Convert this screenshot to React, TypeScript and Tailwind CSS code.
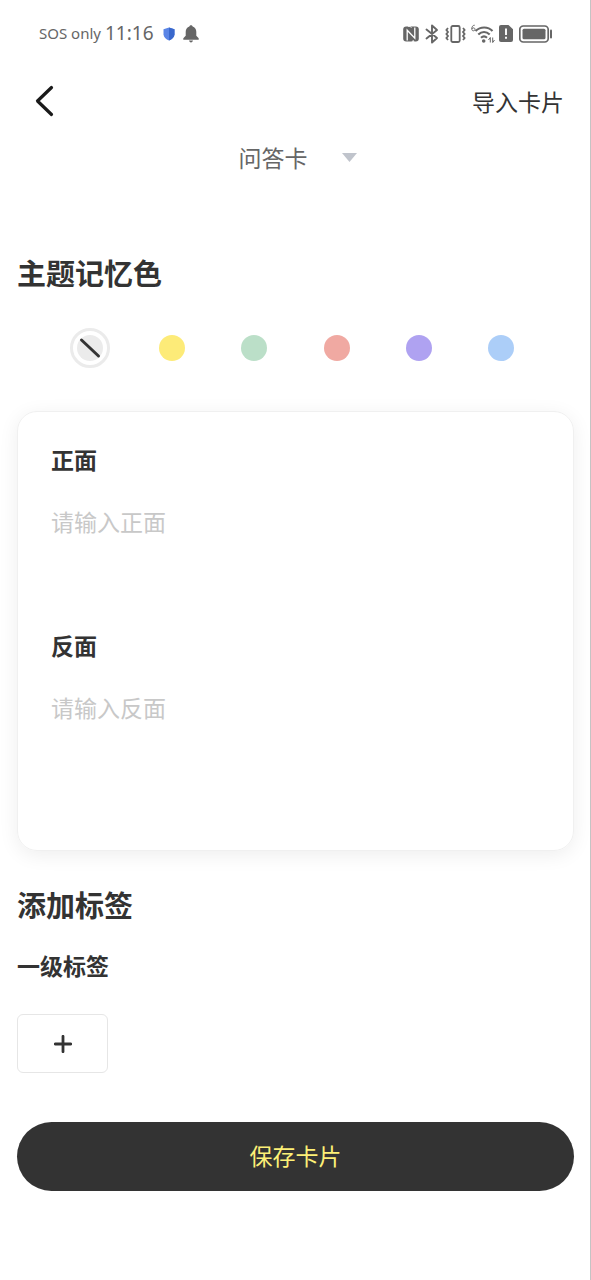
import { useState } from 'react';

const colors = [
  { name: '无颜色', fill: 'bg-[#ebebeb]' },
  { name: '黄色', fill: 'bg-[#fdeb78]' },
  { name: '绿色', fill: 'bg-[#bbdfc8]' },
  { name: '红色', fill: 'bg-[#f0a9a2]' },
  { name: '紫色', fill: 'bg-[#afa2f1]' },
  { name: '蓝色', fill: 'bg-[#accef8]' },
];

function StatusBar() {
  return (
    <div className="flex h-[67px] items-center justify-between pr-[37px] pl-[39px] text-[#666]">
      <div className="flex items-center font-['Noto_Sans',sans-serif]">
        <span className="text-[15px]">SOS only</span>
        <span className="ml-1 text-[19px]">11:16</span>
        <svg className="ml-[9px] h-[14px] w-[12px]" viewBox="0 0 12 14" aria-hidden="true">
          <path d="M6 .5 11.500 2.300V7.200C11.500 10 9 12.300 6 13.500 3 12.300.5 10 .5 7.200V2.300Z" fill="#5a85e6" />
          <path d="M6 .5 11.500 2.300V7.200C11.500 10 9 12.300 6 13.500Z" fill="#3a68cc" />
        </svg>
        <svg className="ml-2 h-[18px] w-[16px]" viewBox="0 0 16 18" fill="currentColor" aria-hidden="true">
          <path d="M8 .3c.9 0 1.600.6 1.600 1.300 2.300.7 3.700 2.600 3.700 5.200v4l2.400 2.500v1.500H.3v-1.500l2.400-2.500v-4c0-2.600 1.400-4.500 3.700-5.200C6.400.9 7.100.3 8 .3ZM6 15.600h4c-.2 1.100-1 1.900-2 1.900s-1.800-.8-2-1.900Z" />
        </svg>
      </div>
      <div className="flex items-center" aria-hidden="true">
        <svg className="h-4 w-4" viewBox="0 0 16 16">
          <rect x=".2" y=".5" width="15.600" height="15" rx="3" fill="currentColor" />
          <path d="M4.200 14.500V4.200l7.600 8V1.500" fill="none" stroke="#fff" strokeWidth="1.300" />
          <path d="M5 .3h2.200l1.200 1.500M8.800 15.700h2.200L9.800 14" fill="none" stroke="#fff" strokeWidth=".9" />
        </svg>
        <svg className="ml-[6px] h-[20px] w-[14px]" viewBox="0 0 14 20" fill="none" stroke="currentColor" strokeWidth="1.900" strokeLinejoin="round" strokeLinecap="round">
          <path d="m1.500 5.500 10.500 8.500-5 4.500v-17l5 4.500L1.500 14.500" />
        </svg>
        <svg className="ml-[6px] h-[18px] w-[21px]" viewBox="0 0 21 18" fill="none" stroke="currentColor" strokeWidth="1.800">
          <rect x="6.300" y="1" width="8.400" height="16" rx="1.500" />
          <path d="M3 3 1.400 5 3 7 1.400 9 3 11l-1.600 2L3 15M18 3l1.600 2L18 7l1.600 2-1.600 2 1.600 2-1.600 2" />
        </svg>
        <svg className="ml-[5px] h-[20px] w-[24px]" viewBox="0 0 24 20" fill="none" stroke="currentColor">
          <path d="M3.700 1.200C1.600 1.200.8 3 .8 4.700c0 1.500.6 2.100 1.600 2.100S4 6.200 4 5.300 3.300 3.900 2.400 3.900.9 4.400.8 5" strokeWidth="1" />
          <path d="M4.500 7c5-4.700 12.500-4.700 17 0M7.300 10.500c3.400-3.200 8-3.200 11.400 0M10 13.700c1.800-1.700 4.200-1.700 6 0" strokeWidth="2.100" />
          <circle cx="12.700" cy="17" r="1.800" fill="currentColor" stroke="none" />
          <path d="M19.300 18.500v-5l-1.800 2.500M21.700 13.500v5l1.800-2.500" strokeWidth="1" />
        </svg>
        <svg className="ml-1 h-[17px] w-[14px]" viewBox="0 0 14 17" fill="currentColor">
          <path d="M2 0h7.500L14 4.300V15a2 2 0 0 1-2 2H2a2 2 0 0 1-2-2V2a2 2 0 0 1 2-2Z" />
          <path d="M7 3.500V10M7 11.800v2" stroke="#fff" strokeWidth="1.900" />
        </svg>
        <svg className="ml-[6px] h-[18px] w-[34px]" viewBox="0 0 34 18">
          <rect x=".8" y="1" width="28.400" height="16" rx="3.500" fill="none" stroke="currentColor" strokeWidth="1.700" />
          <rect x="3.500" y="3.700" width="23" height="10.600" rx="1.500" fill="currentColor" />
          <path d="M32 5.500v7" stroke="currentColor" strokeWidth="2" strokeLinecap="round" />
        </svg>
      </div>
    </div>
  );
}

function Field({ id, label, placeholder }: { id: string; label: string; placeholder: string }) {
  return (
    <div className="flex flex-col">
      <label htmlFor={id} className="text-[23px] leading-[34px] font-bold">
        {label}
      </label>
      <textarea
        id={id}
        placeholder={placeholder}
        className="mt-7 h-[124px] w-full resize-none bg-transparent text-[23px] leading-[34px] outline-none placeholder:text-[#c8c8c8]"
      />
    </div>
  );
}

export default function App() {
  const [selected, setSelected] = useState(0);

  return (
    <div className="min-h-screen border-r border-[#c4c4c4] bg-white font-['Noto_Sans_CJK_SC',sans-serif] text-[#333]">
      <StatusBar />
      <header className="flex h-[68px] items-center justify-between pr-[26px] pl-[34px]">
        <button type="button" aria-label="返回">
          <svg className="h-[32px] w-[20px]" viewBox="0 0 20 32" fill="none" stroke="#1a1a1a" strokeWidth="3.200" strokeLinecap="round" strokeLinejoin="round">
            <path d="M17.500 2.500 3.500 16l14 13.500" />
          </svg>
        </button>
        <button type="button" className="text-[23px] leading-[34px]">导入卡片</button>
      </header>

      <main className="pr-4 pl-[17px]">
        <div className="flex h-11 items-center justify-center pl-1">
          <div className="relative flex items-center">
            <select aria-label="卡片类型" className="w-[118px] appearance-none bg-transparent text-[23px] leading-[34px] text-[#666]">
              <option>问答卡</option>
            </select>
            <svg className="pointer-events-none absolute right-0 h-[9px] w-[15px]" viewBox="0 0 15 9" fill="#c0c4cc" aria-hidden="true">
              <path d="M0 0h15L7.500 9Z" />
            </svg>
          </div>
        </div>

        <h2 className="mt-[71px] text-[29px] leading-[44px] font-bold">主题记忆色</h2>
        <div role="radiogroup" aria-label="主题记忆色" className="mt-[34px] grid grid-cols-6 px-8">
          {colors.map((color, i) => (
            <label key={color.name} className="flex h-10 items-center justify-center">
              <input
                type="radio"
                name="theme-color"
                aria-label={color.name}
                checked={selected === i}
                onChange={() => setSelected(i)}
                className="peer sr-only"
              />
              <span className="flex size-10 items-center justify-center rounded-full border-[3px] border-transparent peer-checked:border-[#ebebeb]">
                <span className={`flex size-[26px] items-center justify-center rounded-full ${color.fill}`}>
                  {i === 0 && (
                    <svg className="size-[22px]" viewBox="0 0 22 22" stroke="#333" strokeWidth="3" strokeLinecap="round" aria-hidden="true">
                      <path d="m2.500 3 17 16" />
                    </svg>
                  )}
                </span>
              </span>
            </label>
          ))}
        </div>

        <section className="mt-[43px] rounded-[20px] border border-[#f0f0f0] px-[33px] pt-[30px] pb-9 shadow-[0_4px_20px_rgba(0,0,0,0.07)]">
          <Field id="front" label="正面" placeholder="请输入正面" />
          <Field id="back" label="反面" placeholder="请输入反面" />
        </section>

        <h2 className="mt-[31px] text-[29px] leading-[44px] font-bold">添加标签</h2>
        <h3 className="mt-[22px] text-[23px] leading-[34px] font-bold">一级标签</h3>
        <button type="button" aria-label="添加一级标签" className="mt-8 flex h-[59px] w-[91px] items-center justify-center rounded-md border border-[#e6e6e6]">
          <svg className="size-[18px]" viewBox="0 0 18 18" stroke="#333" strokeWidth="2.800" strokeLinecap="round" aria-hidden="true">
            <path d="M9 1.300v15.400M1.300 9h15.400" />
          </svg>
        </button>

        <button type="button" className="mt-[49px] flex h-[69px] w-full items-center justify-center rounded-full bg-[#333] pb-1 text-[23px] leading-[34px] text-[#fdf077]">
          保存卡片
        </button>
      </main>
    </div>
  );
}
